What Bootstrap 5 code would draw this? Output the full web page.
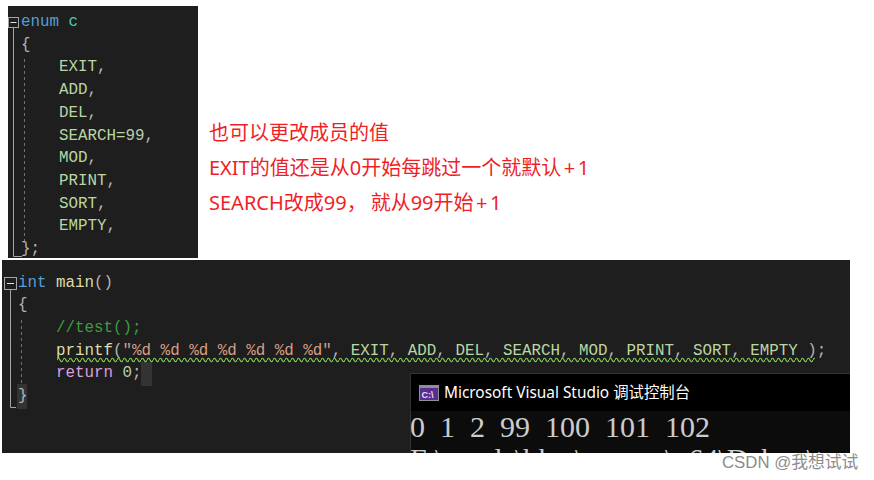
<!DOCTYPE html>
<html lang="zh-CN">
<head>
<meta charset="utf-8">
<title>enum</title>
<link href="https://cdn.jsdelivr.net/npm/bootstrap@5.3.0/dist/css/bootstrap.min.css" rel="stylesheet">
<style>
html,body{background:#fff;overflow:hidden;height:480px}
.shot{width:874px;height:480px;position:relative}
.pane-a,.pane-b{background:#1e1e1e;position:relative;overflow:hidden}
.pane-a{width:190px;height:252px;margin:6px 0 0 8px}
.pane-b{width:848px;height:193px;margin:2px 0 0 2px}
.code{margin:0;overflow:visible;font:15.85px/22.7px "Liberation Mono",monospace;color:#b4b4b4;white-space:pre;position:relative}
.pane-a .code{padding:5px 0 0 13px}
.pane-b .code{padding:11.500px 0 0 16px}
.gut{position:absolute;left:0;top:0;width:100%;height:100%}
.kw{color:#569cd6}.ty{color:#4ec9b0}.mem{color:#b8d7a3}.fn{color:#dcdcaa}.str{color:#d69d85}.com{color:#3f9b3f}.ctl{color:#d8a0df}.num{color:#b5cea8}
.note{margin:115px 0 0 11px;font:20px/35px "Noto Sans","Noto Sans CJK SC",sans-serif;color:#f01e26}
.note div{white-space:nowrap}
.plus{margin:0 2.500px}
.comma{margin-right:4px}
.console{position:absolute;left:408px;top:113px;width:440px;height:80px;background:#0c0c0c;border-top:1px solid #333;border-left:1px solid #333;overflow:hidden}
.con-title{height:37px;background:#000;color:#fff;font:15.4px/37px "Noto Sans","Noto Sans CJK SC",sans-serif;padding-left:8px;gap:5px}
.con-body{font:30px/32px "Liberation Serif","Noto Sans CJK SC",serif;color:#ccc;word-spacing:7.5px;white-space:pre;margin-left:-1px}
.mark-csdn{position:absolute;left:722px;top:452px;font:16.8px/22px "Liberation Sans","Noto Sans CJK SC",sans-serif;color:#8c8c8c;white-space:nowrap}
</style>
</head>
<body>
<div class="shot">
  <div class="d-flex align-items-start">
    <div class="pane-a">
      <svg class="gut" viewBox="0 0 190 252" aria-hidden="true">
        <rect x="0.5" y="11.5" width="10" height="10" fill="#1e1e1e" stroke="#a5a5a5"/>
        <path d="M2.5 16.5h6" stroke="#e0e0e0"/>
        <path d="M5.5 22V250.500H14" fill="none" stroke="#a5a5a5"/>
        <path d="M16.5 53V235" stroke="#707070" stroke-dasharray="3 3"/>
      </svg>
      <pre class="code"><span class="kw">enum</span> <span class="ty">c</span>
{
    <span class="mem">EXIT</span>,
    <span class="mem">ADD</span>,
    <span class="mem">DEL</span>,
    <span class="mem">SEARCH</span><span class="mem">=</span><span class="num">99</span>,
    <span class="mem">MOD</span>,
    <span class="mem">PRINT</span>,
    <span class="mem">SORT</span>,
    <span class="mem">EMPTY</span>,
};</pre>
    </div>
    <div class="note">
      <div>也可以更改成员的值</div>
      <div>EXIT的值还是从0开始每跳过一个就默认<span class="plus">+</span>1</div>
      <div>SEARCH改成99<span class="comma">，</span>就从99开始<span class="plus">+</span>1</div>
    </div>
  </div>
  <div class="pane-b">
    <svg class="gut" viewBox="0 0 848 193" aria-hidden="true">
      <defs>
        <pattern id="sq" x="55" y="97" width="6" height="6" patternUnits="userSpaceOnUse">
          <path d="M0 3q1.500-3.500 3 0t3 0" fill="none" stroke="#86c860" stroke-width="1.2"/>
        </pattern>
      </defs>
      <rect x="2.5" y="17.5" width="12" height="12" fill="#1e1e1e" stroke="#a5a5a5"/>
      <path d="M5 23.5h7" stroke="#e0e0e0"/>
      <path d="M8.5 30V147.500H14" fill="none" stroke="#a5a5a5"/>
      <path d="M19.5 60V125" stroke="#707070" stroke-dasharray="3 3"/>
      <rect x="139" y="102" width="11" height="24" fill="#333"/>
      <rect x="15" y="124" width="10" height="25" fill="#333"/>
      <rect x="55" y="97" width="758" height="6" fill="url(#sq)"/>
    </svg>
    <pre class="code"><span class="kw">int</span> <span class="fn">main</span>()
{
    <span class="com">//test();</span>
    <span class="fn">printf</span>(<span class="str">"%d %d %d %d %d %d %d"</span>, <span class="mem">EXIT</span>, <span class="mem">ADD</span>, <span class="mem">DEL</span>, <span class="mem">SEARCH</span>, <span class="mem">MOD</span>, <span class="mem">PRINT</span>, <span class="mem">SORT</span>, <span class="mem">EMPTY</span> );
    <span class="ctl">return</span> <span class="num">0</span>;
}</pre>
    <div class="console">
      <div class="con-title d-flex align-items-center">
        <svg width="20" height="16" viewBox="0 0 20 16" aria-hidden="true">
          <rect width="20" height="16" fill="#8f8f9a"/>
          <rect x="1" y="3" width="18" height="12" fill="#5a2d91"/>
          <text x="2.500" y="12.500" font-family="Liberation Sans" font-size="9" font-weight="700" fill="#e6e0f0">C:\</text>
        </svg>
        <span>Microsoft Visual Studio 调试控制台</span>
      </div>
      <div class="con-body">0 1 2 99 100 101 102
F:\ code\bkw\ enum\x64\Debug\test.exe</div>
    </div>
  </div>
  <div class="mark-csdn">CSDN @我想试试</div>
</div>
<script src="https://cdn.jsdelivr.net/npm/bootstrap@5.3.0/dist/js/bootstrap.bundle.min.js"></script>
</body>
</html>
